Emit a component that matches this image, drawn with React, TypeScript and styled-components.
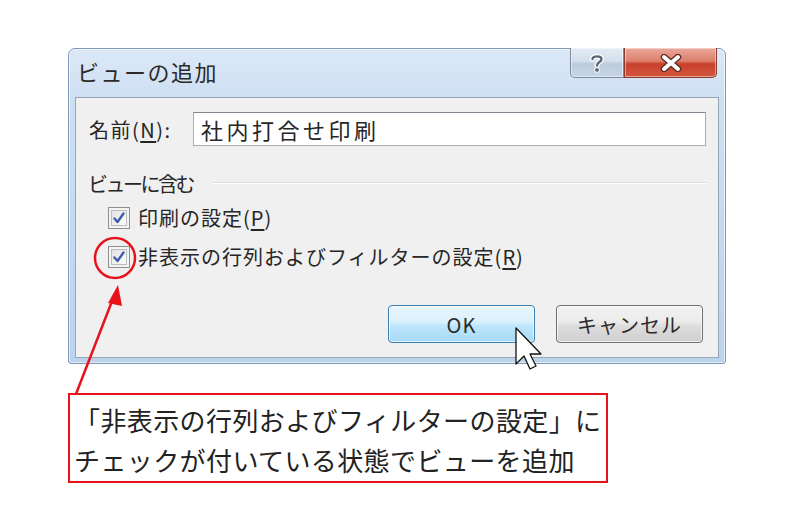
import React from 'react';
import styled, { createGlobalStyle } from 'styled-components';

const GlobalStyle = createGlobalStyle`
    html, body {
        margin: 0;
        padding: 0;
        background: #ffffff;
    }
    body {
        font-family: "Noto Sans CJK JP", "Noto Sans", sans-serif;
        color: #262626;
    }
`

const Stage = styled.div`
    position: relative;
    width: 800px;
    height: 520px;
    padding: 48px 0 0 68px;
    box-sizing: border-box;
`
const Window = styled.div`
    width: 658px;
    height: 316px;
    box-sizing: border-box;
    border: 1px solid #7e98b8;
    border-radius: 7px 7px 3px 3px;
    background: linear-gradient(180deg, #dce8f6 0%, #cfe0f3 15%, #c5d9ef 60%, #bcd3ec 100%);
    display: flex;
    flex-direction: column;
    box-shadow: inset 0 0 0 1px rgba(255,255,255,0.6);
`
const TitleBar = styled.div`
    height: 48px;
    display: flex;
    align-items: flex-start;
    justify-content: space-between;
    padding: 0 8px 0 8px;
    flex-shrink: 0;
`
const Title = styled.div`
    font-size: 22px;
    letter-spacing: 1.5px;
    line-height: 1;
    margin-top: 11px;
    color: #2a2a2a;
`
const Captions = styled.div`
    display: flex;
    margin-top: -1px;
`
const CaptionButton = styled.div<{ $close?: boolean }>`
    width: ${({ $close }) => ($close ? '93px' : '54px')};
    height: 30px;
    box-sizing: border-box;
    display: flex;
    align-items: center;
    justify-content: center;
    border: 1px solid ${({ $close }) => ($close ? '#8a3a2e' : '#7d8a9c')};
    border-top: none;
    border-radius: ${({ $close }) => ($close ? '0 0 5px 0' : '0 0 0 5px')};
    background: ${({ $close }) =>
        $close
            ? 'linear-gradient(180deg, #e9a99b 0%, #dd7f6c 45%, #c7402a 55%, #d2573f 100%)'
            : 'linear-gradient(180deg, #e4ecf5 0%, #d3dfec 45%, #bccbdc 55%, #c8d6e6 100%)'};
    box-shadow: inset 0 0 0 1px rgba(255,255,255,0.45);
`
const Client = styled.div`
    flex: 1;
    margin: 0 6px 5px 6px;
    border: 1px solid #96a6ba;
    background: #f0f0f0;
    display: flex;
    flex-direction: column;
    padding: 14px 12px 0 12px;
    box-sizing: border-box;
    font-size: 20px;
`
const NameRow = styled.div`
    display: flex;
    align-items: center;
`
const Label = styled.div`
    width: 104px;
    letter-spacing: 1.5px;
    padding-left: 1px;
`
const Underline = styled.span`
    text-decoration: underline;
    text-underline-offset: 3px;
`
const TextInput = styled.div`
    flex: 1;
    height: 34px;
    box-sizing: border-box;
    border: 1px solid #a8abb2;
    border-top-color: #7f8690;
    background: #ffffff;
    display: flex;
    align-items: center;
    padding-left: 7px;
    font-size: 22px;
    letter-spacing: 3.5px;
`
const GroupHeader = styled.div`
    display: flex;
    align-items: center;
    gap: 20px;
    margin-top: 24px;
    height: 26px;
    letter-spacing: -2.5px;
`
const GroupLine = styled.div`
    flex: 1;
    height: 1px;
    background: #d5dce4;
    border-bottom: 1px solid #ffffff;
`
const CheckRow = styled.label`
    display: flex;
    align-items: center;
    gap: 8px;
    margin-left: 20px;
    height: 39px;
    letter-spacing: 1px;
`
const CheckFirst = styled(CheckRow)`
    margin-top: 2px;
`
const Box = styled.div`
    width: 22px;
    height: 22px;
    box-sizing: border-box;
    border: 1px solid #8e8f8f;
    background: linear-gradient(135deg, #dcdcdc 0%, #f4f4f4 60%, #ffffff 100%);
    box-shadow: inset 0 0 0 2px #f4f4f4, inset 0 0 0 3px #bcbcbc;
    display: flex;
    align-items: center;
    justify-content: center;
`
const ButtonRow = styled.div`
    display: flex;
    justify-content: flex-end;
    gap: 21px;
    margin-top: 29px;
    padding-right: 3px;
`
const DialogButton = styled.div<{ $primary?: boolean }>`
    width: 147px;
    height: 38px;
    box-sizing: border-box;
    border-radius: 4px;
    display: flex;
    align-items: center;
    justify-content: center;
    font-size: 20px;
    letter-spacing: 1px;
    color: #2b2b2b;
    border: 1px solid ${({ $primary }) => ($primary ? '#3c7fb1' : '#707070')};
    background: ${({ $primary }) =>
        $primary
            ? 'linear-gradient(180deg, #eaf6fd 0%, #d9f0fc 45%, #bee6fd 55%, #a7d9f5 100%)'
            : 'linear-gradient(180deg, #f2f2f2 0%, #ebebeb 45%, #dddddd 55%, #cfcfcf 100%)'};
    box-shadow: inset 0 0 0 1px rgba(255,255,255,0.7);
`
const Callout = styled.div`
    margin-top: 29px;
    width: 540px;
    height: 90px;
    box-sizing: border-box;
    border: 2px solid #e8121b;
    padding: 5px 0 0 4px;
    font-size: 26px;
    line-height: 40px;
    letter-spacing: 0.4px;
    color: #222;
`
const Overlay = styled.svg`
    position: absolute;
    left: 0;
    top: 0;
    pointer-events: none;
`

const Check = () => (
    <svg width="14" height="14" viewBox="0 0 14 14">
        <path d="M2.5 7.5 L5.5 11 L11.5 2.5" fill="none" stroke="#3d5ca8" strokeWidth="2.4" strokeLinecap="round" strokeLinejoin="round" />
    </svg>
)

export default function App() {
    return (
        <>
            <GlobalStyle />
            <Stage>
                <Window>
                    <TitleBar>
                        <Title>ビューの追加</Title>
                        <Captions>
                            <CaptionButton>
                                <svg width="16" height="20" viewBox="0 0 16 20">
                                    <path d="M3.5 6 C3.5 2.5 12.5 2.5 12.5 6.2 C12.5 9 8 9.2 8 12.5" fill="none" stroke="#ffffff" strokeWidth="5" strokeLinecap="round" />
                                    <path d="M3.5 6 C3.5 2.5 12.5 2.5 12.5 6.2 C12.5 9 8 9.2 8 12.5" fill="none" stroke="#5b6675" strokeWidth="2.4" strokeLinecap="round" />
                                    <circle cx="8" cy="17" r="2.4" fill="#5b6675" stroke="#fff" strokeWidth="1" />
                                </svg>
                            </CaptionButton>
                            <CaptionButton $close>
                                <svg width="22" height="18" viewBox="0 0 22 18">
                                    <path d="M4 3 L18 15 M18 3 L4 15" stroke="#5a2a24" strokeWidth="6.5" strokeLinecap="round" />
                                    <path d="M4 3 L18 15 M18 3 L4 15" stroke="#ffffff" strokeWidth="4" strokeLinecap="round" />
                                </svg>
                            </CaptionButton>
                        </Captions>
                    </TitleBar>
                    <Client>
                        <NameRow>
                            <Label>名前(<Underline>N</Underline>):</Label>
                            <TextInput>社内打合せ印刷</TextInput>
                        </NameRow>
                        <GroupHeader>
                            <span>ビューに含む</span>
                            <GroupLine />
                        </GroupHeader>
                        <CheckFirst>
                            <Box><Check /></Box>
                            <span>印刷の設定(<Underline>P</Underline>)</span>
                        </CheckFirst>
                        <CheckRow>
                            <Box><Check /></Box>
                            <span>非表示の行列およびフィルターの設定(<Underline>R</Underline>)</span>
                        </CheckRow>
                        <ButtonRow>
                            <DialogButton $primary>OK</DialogButton>
                            <DialogButton>キャンセル</DialogButton>
                        </ButtonRow>
                    </Client>
                </Window>
                <Callout>
                    「非表示の行列およびフィルターの設定」に<br />
                    チェックが付いている状態でビューを追加
                </Callout>
                <Overlay width="800" height="520" viewBox="0 0 800 520">
                    <circle cx="115" cy="258" r="20" fill="none" stroke="#e8121b" strokeWidth="2.5" />
                    <line x1="76" y1="394" x2="114" y2="296" stroke="#e8121b" strokeWidth="2.5" />
                    <polygon points="118,285 108,303 122,306" fill="#e8121b" />
                    <path d="M516 328 L516 364 L524 356 L530 369 L536 366 L530 354 L541 354 Z" fill="#ffffff" stroke="#111" strokeWidth="1.3" strokeLinejoin="round" />
                </Overlay>
            </Stage>
        </>
    );
}
